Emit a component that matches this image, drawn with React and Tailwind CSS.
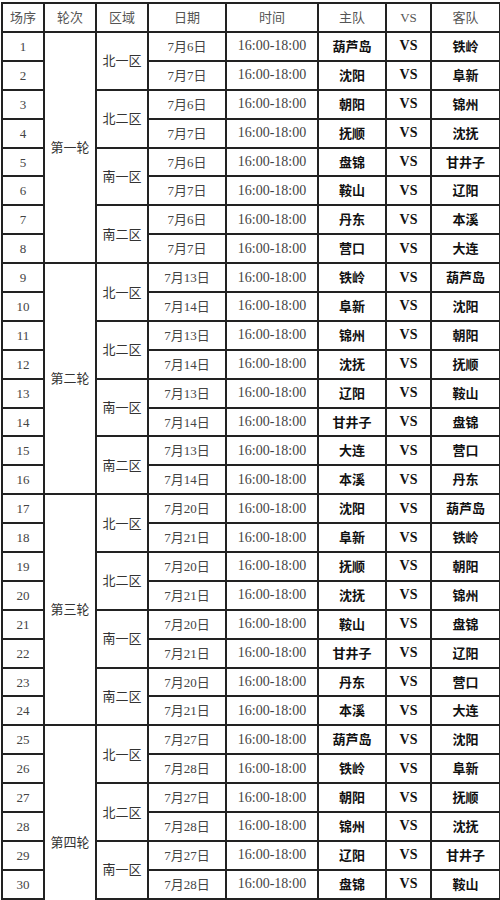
import React from "react";

const rounds = [
  {
    name: "第一轮",
    dates: ["7月6日", "7月7日"],
    zones: [
      ["北一区", [["葫芦岛", "铁岭"], ["沈阳", "阜新"]]],
      ["北二区", [["朝阳", "锦州"], ["抚顺", "沈抚"]]],
      ["南一区", [["盘锦", "甘井子"], ["鞍山", "辽阳"]]],
      ["南二区", [["丹东", "本溪"], ["营口", "大连"]]],
    ],
  },
  {
    name: "第二轮",
    dates: ["7月13日", "7月14日"],
    zones: [
      ["北一区", [["铁岭", "葫芦岛"], ["阜新", "沈阳"]]],
      ["北二区", [["锦州", "朝阳"], ["沈抚", "抚顺"]]],
      ["南一区", [["辽阳", "鞍山"], ["甘井子", "盘锦"]]],
      ["南二区", [["大连", "营口"], ["本溪", "丹东"]]],
    ],
  },
  {
    name: "第三轮",
    dates: ["7月20日", "7月21日"],
    zones: [
      ["北一区", [["沈阳", "葫芦岛"], ["阜新", "铁岭"]]],
      ["北二区", [["抚顺", "朝阳"], ["沈抚", "锦州"]]],
      ["南一区", [["鞍山", "盘锦"], ["甘井子", "辽阳"]]],
      ["南二区", [["丹东", "营口"], ["本溪", "大连"]]],
    ],
  },
  {
    // last round is cut off at the bottom of the screenshot
    name: "第四轮",
    dates: ["7月27日", "7月28日"],
    zones: [
      ["北一区", [["葫芦岛", "沈阳"], ["铁岭", "阜新"]]],
      ["北二区", [["朝阳", "抚顺"], ["锦州", "沈抚"]]],
      ["南一区", [["辽阳", "甘井子"], ["盘锦", "鞍山"]]],
    ],
  },
];

const td = "border-2 border-[#222] text-center p-0";

export default function App() {
  let n = 0;
  const rows = [];
  rounds.forEach((r, ri) => {
    const span = r.zones.length * 2;
    r.zones.forEach(([zone, games], zi) => {
      games.forEach(([home, away], gi) => {
        n += 1;
        rows.push(
          <tr key={n} className="h-[28.9px]">
            <td className={td + " text-[#444]"}>{n}</td>
            {zi === 0 && gi === 0 && (
              <td
                rowSpan={span}
                className={td + " text-[#333] border-b-0 " + (span < 8 ? "pt-[60px]" : "")}
              >
                {r.name}
              </td>
            )}
            {gi === 0 && (
              <td rowSpan={2} className={td + " text-[#333]"}>
                {zone}
              </td>
            )}
            <td className={td + " text-[#444]"}>{r.dates[gi]}</td>
            <td className={td + " text-[#444] text-[14px]"}>16:00-18:00</td>
            <td className={td + " font-bold text-[#111]"}>{home}</td>
            <td className={td + " font-bold text-[#111] text-[14px]"}>VS</td>
            <td className={td + " font-bold text-[#111]"}>{away}</td>
          </tr>
        );
      });
    });
  });

  return (
    <div
      className="w-[500px] h-[900px] overflow-hidden bg-white pt-[2px] pl-[1px]"
      style={{ fontFamily: '"Liberation Serif", "Noto Sans CJK SC", serif' }}
    >
      <table className="border-collapse table-fixed w-[498px] text-[13px] leading-none">
        <colgroup>
          <col className="w-[42px]" />
          <col className="w-[52px]" />
          <col className="w-[52px]" />
          <col className="w-[78px]" />
          <col className="w-[92px]" />
          <col className="w-[68px]" />
          <col className="w-[45px]" />
          <col className="w-[69px]" />
        </colgroup>
        <thead>
          <tr className="h-[29px] text-[#555]">
            <th className={td + " font-normal"}>场序</th>
            <th className={td + " font-normal"}>轮次</th>
            <th className={td + " font-normal"}>区域</th>
            <th className={td + " font-normal"}>日期</th>
            <th className={td + " font-normal"}>时间</th>
            <th className={td + " font-normal"}>主队</th>
            <th className={td + " font-normal"}>VS</th>
            <th className={td + " font-normal"}>客队</th>
          </tr>
        </thead>
        <tbody>{rows}</tbody>
      </table>
    </div>
  );
}
